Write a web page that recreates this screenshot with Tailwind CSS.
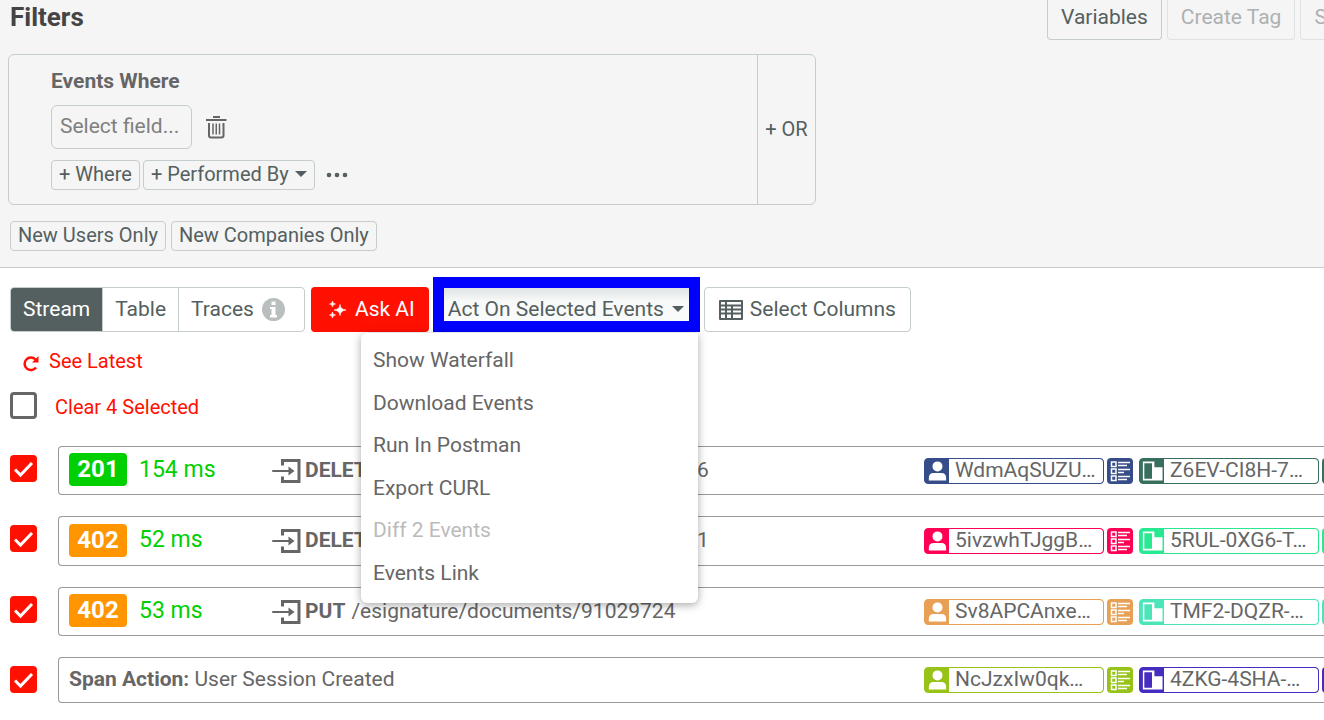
<!DOCTYPE html>
<html lang="en">
<head>
    <meta charset="utf-8">
    <meta name="viewport" content="width=device-width, initial-scale=1.0">
    <title>Events</title>
    <script src="https://cdn.jsdelivr.net/npm/@tailwindcss/browser@4"></script>
</head>
<body class="bg-white font-['Roboto',sans-serif] text-[21px] leading-6 text-[#666] overflow-x-hidden">

    <!-- shared icons -->
    <svg class="hidden">
        <symbol id="caret" viewBox="0 0 12 6"><path fill="currentColor" d="M0 0H12L6 6Z"/></symbol>
        <symbol id="check" viewBox="0 0 27 27"><path fill="none" stroke="#fff" stroke-width="3" d="M5 14.500L10.500 20L22 8"/></symbol>
        <symbol id="incoming" viewBox="0 0 29 24">
            <path fill="none" stroke="currentColor" stroke-width="3" d="M10.500 6.500V1.500H27V22.500H10.500V17.500"/>
            <path fill="none" stroke="currentColor" stroke-width="2" stroke-linecap="round" d="M1 12H18"/>
            <path fill="currentColor" d="M16.500 7.500L22.500 12L16.500 16.500Z"/>
        </symbol>
        <symbol id="user" viewBox="0 0 25 26"><path fill="#fff" d="M13 3A5.200 5.200 0 1 1 13 13.400A5.200 5.200 0 1 1 13 3ZM4 23V20Q4 15 9 15H17Q22 15 22 20V23Z"/></symbol>
        <symbol id="list" viewBox="0 0 26 26" fill="none" stroke="#fff">
            <path stroke-width="1.500" d="M4.500 4H9V8.500H4.500ZM4.500 11H9V15.500H4.500ZM4.500 18H9V22.500H4.500Z"/>
            <path stroke-width="1.500" d="M11 4.500H23M11 7.500H20M11 11.500H23M11 14.500H17M11 18.500H23M11 21.500H20"/>
        </symbol>
        <symbol id="company" viewBox="0 0 25 26"><path fill="#fff" fill-rule="evenodd" d="M3 3H15V9H23.500V23H3ZM4.500 5V21H12.500V5Z"/></symbol>
    </svg>

    <header class="bg-[#f5f5f5] border-b border-[#c5cdcd] pb-4">
        <div class="flex justify-between h-10 pl-2.5 overflow-hidden">
            <h1 class="text-[26px] leading-8 font-bold text-[#444] pt-px">Filters</h1>
            <div class="flex gap-[5px] w-[277px] whitespace-nowrap text-[#546060]">
                <button class="shrink-0 border border-t-0 border-[#c5cdcd] rounded-b px-[13px] pb-1.5">Variables</button>
                <button disabled class="shrink-0 border border-t-0 border-[#c5cdcd] rounded-b px-[13px] pb-1.5 opacity-45">Create Tag</button>
                <button disabled class="shrink-0 border border-t-0 border-[#c5cdcd] rounded-b px-[13px] pb-1.5 opacity-45">Save</button>
            </div>
        </div>

        <section class="flex mt-3.5 ml-2 max-w-[808px] border border-[#c5cdcd] rounded-md">
            <div class="grow pl-[42px] py-3.5">
                <h2 class="font-bold">Events Where</h2>
                <div class="flex items-center gap-3.5 mt-3">
                    <input type="text" aria-label="Field" placeholder="Select field..." class="w-[141px] h-11 pl-2 pb-0.5 border border-[#c5cdcd] rounded-md placeholder:text-[#808080]">
                    <button aria-label="Delete">
                        <svg class="w-[22px] h-6" viewBox="0 0 22 24" fill="none" stroke="#666" stroke-width="2"><path d="M0 5H20.500M7 2H14M3 8V20.500Q3 22.500 5 22.500H15.500Q17.500 22.500 17.500 20.500V8"/><path stroke-width="1.500" d="M7 8.500V19.500M10.250 8.500V19.500M13.500 8.500V19.500"/></svg>
                    </button>
                </div>
                <div class="flex items-center gap-[3px] mt-[11px] text-[20px] text-[#546060]">
                    <button class="h-[30px] px-[7px] pb-0.5 border border-[#c5cdcd] rounded">+ Where</button>
                    <button class="flex items-center gap-1.5 h-[30px] px-[7px] pb-0.5 border border-[#c5cdcd] rounded">+ Performed By
                        <svg class="w-3 h-1.5"><use href="#caret"/></svg>
                    </button>
                    <button aria-label="More" class="ml-2">
                        <svg class="w-[22px] h-1.5" viewBox="0 0 22 6" fill="#546060"><circle cx="3" cy="3" r="2.300"/><circle cx="11" cy="3" r="2.300"/><circle cx="19" cy="3" r="2.300"/></svg>
                    </button>
                </div>
            </div>
            <button class="w-[58px] pb-0.5 border-l border-[#c5cdcd] text-[20px] text-[#546060]">+ OR</button>
        </section>

        <div class="flex gap-[5px] mt-4 ml-2.5 text-[20px] text-[#546060]">
            <button class="h-[30px] px-[7px] pb-0.5 border border-[#c5cdcd] rounded">New Users Only</button>
            <button class="h-[30px] px-[7px] pb-0.5 border border-[#c5cdcd] rounded">New Companies Only</button>
        </div>
    </header>

    <main>
        <!-- toolbar -->
        <div class="relative flex items-end mt-[9px] ml-2.5 h-14 pb-px text-[#546060] whitespace-nowrap">
            <div class="flex h-[45px] border border-[#c5cdcd] rounded overflow-hidden">
                <button class="px-3 pb-0.5 bg-[#546060] text-white">Stream</button>
                <button class="px-3 pb-0.5 border-l border-[#c5cdcd]">Table</button>
                <button class="flex items-center gap-2 pl-3 pr-[19px] pb-0.5 border-l border-[#c5cdcd]">Traces
                    <svg class="w-[23px] h-[23px] mt-0.5" viewBox="0 0 23 23"><circle cx="11.500" cy="11.500" r="11.500" fill="#b9bfbf"/><path fill="#fff" d="M9.500 3.500H13.500V7H9.500ZM8 9H13.500V17H15V19.500H8V17H9.500V11H8Z"/></svg>
                </button>
            </div>
            <button class="flex items-center gap-2 h-[45px] ml-1.5 pl-[17px] pr-[14px] pb-0.5 rounded bg-[#ff1000] text-white">
                <svg class="w-[19px] h-[19px] mt-0.5" viewBox="0 0 19 19" fill="#fff"><path d="M12 4.500Q12.500 9.500 18 10Q12.500 10.500 12 15.500Q11.500 10.500 6 10Q11.500 9.500 12 4.500ZM4.500 1Q4.700 3.800 7.500 4Q4.700 4.200 4.500 7Q4.300 4.200 1.500 4Q4.300 3.800 4.500 1ZM4.500 12Q4.700 14.800 7.500 15Q4.700 15.200 4.500 18Q4.300 15.200 1.500 15Q4.300 14.800 4.500 12Z" stroke="#fff" stroke-width=".6"/></svg>
                Ask AI
            </button>
            <button class="flex items-center gap-2 h-[55px] ml-1 pl-1 pr-[5px] pt-2 border-[11px] border-[#0000ff] bg-linear-to-b from-[#dfe3e3] via-[#f8f9f9] via-40% to-[#f9fbfb]">Act On Selected Events
                <svg class="w-3 h-1.5"><use href="#caret"/></svg>
            </button>
            <button class="flex items-center gap-[7px] h-[45px] ml-1 px-[14px] pb-0.5 border border-[#c5cdcd] rounded">
                <svg class="w-6 h-[22px] mt-0.5" viewBox="0 0 24 22"><path fill="#546060" fill-rule="evenodd" d="M1 1H23Q24 1 24 2V20Q24 21 23 21H1Q0 21 0 20V2Q0 1 1 1ZM2 3V5.500H6V3ZM8 3V5.500H22V3ZM2 7.500V9.500H6V7.500ZM8 7.500V9.500H12V7.500ZM14 7.500V9.500H22V7.500ZM2 11.500V13.500H6V11.500ZM8 11.500V13.500H12V11.500ZM14 11.500V13.500H22V11.500ZM2 15.500V19H6V15.500ZM8 15.500V19H12V15.500ZM14 15.500V19H22V15.500Z"/></svg>
                Select Columns
            </button>

            <ul class="absolute z-10 left-[351px] top-14 w-[337px] pt-1.5 pb-[9px] bg-white rounded-md rounded-tr-none shadow-[0_2px_8px_rgba(0,0,0,0.35)] text-[#666]">
                <li><button class="w-full h-[42px] px-3 text-left">Show Waterfall</button></li>
                <li><button class="w-full h-[43px] px-3 text-left">Download Events</button></li>
                <li><button class="w-full h-[42px] px-3 text-left">Run In Postman</button></li>
                <li><button class="w-full h-[43px] px-3 text-left">Export CURL</button></li>
                <li><button disabled class="w-full h-[42px] px-3 text-left text-[#bbb]">Diff 2 Events</button></li>
                <li><button class="w-full h-[43px] px-3 text-left">Events Link</button></li>
            </ul>
        </div>

        <button class="flex items-center gap-2.5 mt-4 ml-[22px] text-[20px] text-[#ff1000]">
            <svg class="w-[17px] h-[17px] mt-1" viewBox="0 0 17 17"><path fill="none" stroke="#ff1000" stroke-width="2.500" d="M13.500 4.500A6.300 6.300 0 1 0 14 12.500"/><path fill="#ff1000" d="M16.500 1V7.500H10Z"/></svg>
            See Latest
        </button>

        <div class="flex items-center mt-[19px] ml-2.5 text-[20px]">
            <input type="checkbox" aria-label="Select all events" class="appearance-none w-[27px] h-[27px] border-3 border-[#666] rounded-sm">
            <button class="ml-[18px] pt-0.5 text-[#ff1000]">Clear 4 Selected</button>
        </div>

        <!-- event stream -->
        <ul class="flex flex-col gap-[21px] mt-[27px] ml-2.5 whitespace-nowrap">
            <li class="flex items-start">
                <label class="grid mt-[9px] mr-[21px]">
                    <input type="checkbox" checked aria-label="Select event" class="col-start-1 row-start-1 appearance-none w-[27px] h-[27px] rounded-sm bg-[#ff1000]">
                    <svg class="col-start-1 row-start-1 w-[27px] h-[27px] pointer-events-none"><use href="#check"/></svg>
                </label>
                <div class="grow min-w-0 overflow-hidden flex items-center h-[49px] pl-2.5 border border-r-0 border-[#999] rounded-l">
                    <span class="w-[58px] h-[33px] mb-0.5 rounded bg-[#00d000] text-white text-[24px] leading-8 font-bold text-center">201</span>
                    <span class="w-[145px] pl-3 pb-0.5 text-[23px] text-[#00d000]">154 ms</span>
                    <svg class="w-[29px] h-6 mr-1"><use href="#incoming"/></svg>
                    <p class="grow flex gap-1.5 pb-0.5"><b>DELETE</b> /esignature/documents/91029766</p>
                    <div class="shrink-0 flex w-[400px]">
                        <a href="#" class="shrink-0 flex items-center w-[180px] h-[26px] border border-[#364d8a] bg-[#364d8a] rounded overflow-hidden">
                            <svg class="w-6 h-[26px]"><use href="#user"/></svg>
                            <span class="grow h-6 pl-1.5 bg-white rounded-r-[3px] leading-[22px]">WdmAqSUZU…</span>
                        </a>
                        <button aria-label="User events" class="shrink-0 ml-[3px] mr-1.5 rounded bg-[#364d8a]"><svg class="w-[26px] h-[26px]"><use href="#list"/></svg></button>
                        <a href="#" class="shrink-0 flex items-center w-[180px] h-[26px] border border-[#386e5e] bg-[#386e5e] rounded overflow-hidden">
                            <svg class="w-6 h-[26px]"><use href="#company"/></svg>
                            <span class="grow h-6 pl-1.5 bg-white rounded-r-[3px] leading-[22px]">Z6EV-CI8H-7…</span>
                        </a>
                        <button aria-label="Company events" class="shrink-0 ml-[3px] rounded bg-[#386e5e]"><svg class="w-[26px] h-[26px]"><use href="#list"/></svg></button>
                    </div>
                </div>
            </li>
            <li class="flex items-start">
                <label class="grid mt-[9px] mr-[21px]">
                    <input type="checkbox" checked aria-label="Select event" class="col-start-1 row-start-1 appearance-none w-[27px] h-[27px] rounded-sm bg-[#ff1000]">
                    <svg class="col-start-1 row-start-1 w-[27px] h-[27px] pointer-events-none"><use href="#check"/></svg>
                </label>
                <div class="grow min-w-0 overflow-hidden flex items-center h-[50px] pl-2.5 border border-r-0 border-[#999] rounded-l">
                    <span class="w-[58px] h-[33px] mb-0.5 rounded bg-[#ff9500] text-white text-[24px] leading-8 font-bold text-center">402</span>
                    <span class="w-[145px] pl-3 pb-0.5 text-[23px] text-[#00d000]">52 ms</span>
                    <svg class="w-[29px] h-6 mr-1"><use href="#incoming"/></svg>
                    <p class="grow flex gap-1.5 pb-0.5"><b>DELETE</b> /esignature/documents/91029741</p>
                    <div class="shrink-0 flex w-[400px]">
                        <a href="#" class="shrink-0 flex items-center w-[180px] h-[26px] border border-[#ff0055] bg-[#ff0055] rounded overflow-hidden">
                            <svg class="w-6 h-[26px]"><use href="#user"/></svg>
                            <span class="grow h-6 pl-1.5 bg-white rounded-r-[3px] leading-[22px]">5ivzwhTJggB…</span>
                        </a>
                        <button aria-label="User events" class="shrink-0 ml-[3px] mr-1.5 rounded bg-[#ff0055]"><svg class="w-[26px] h-[26px]"><use href="#list"/></svg></button>
                        <a href="#" class="shrink-0 flex items-center w-[180px] h-[26px] border border-[#28e890] bg-[#28e890] rounded overflow-hidden">
                            <svg class="w-6 h-[26px]"><use href="#company"/></svg>
                            <span class="grow h-6 pl-1.5 bg-white rounded-r-[3px] leading-[22px]">5RUL-0XG6-T…</span>
                        </a>
                        <button aria-label="Company events" class="shrink-0 ml-[3px] rounded bg-[#28e890]"><svg class="w-[26px] h-[26px]"><use href="#list"/></svg></button>
                    </div>
                </div>
            </li>
            <li class="flex items-start">
                <label class="grid mt-[9px] mr-[21px]">
                    <input type="checkbox" checked aria-label="Select event" class="col-start-1 row-start-1 appearance-none w-[27px] h-[27px] rounded-sm bg-[#ff1000]">
                    <svg class="col-start-1 row-start-1 w-[27px] h-[27px] pointer-events-none"><use href="#check"/></svg>
                </label>
                <div class="grow min-w-0 overflow-hidden flex items-center h-[49px] pl-2.5 border border-r-0 border-[#999] rounded-l">
                    <span class="w-[58px] h-[33px] mb-0.5 rounded bg-[#ff9500] text-white text-[24px] leading-8 font-bold text-center">402</span>
                    <span class="w-[145px] pl-3 pb-0.5 text-[23px] text-[#00d000]">53 ms</span>
                    <svg class="w-[29px] h-6 mr-1"><use href="#incoming"/></svg>
                    <p class="grow flex gap-1.5 pb-0.5"><b>PUT</b> /esignature/documents/91029724</p>
                    <div class="shrink-0 flex w-[400px]">
                        <a href="#" class="shrink-0 flex items-center w-[180px] h-[26px] border border-[#e8a057] bg-[#e8a057] rounded overflow-hidden">
                            <svg class="w-6 h-[26px]"><use href="#user"/></svg>
                            <span class="grow h-6 pl-1.5 bg-white rounded-r-[3px] leading-[22px]">Sv8APCAnxe…</span>
                        </a>
                        <button aria-label="User events" class="shrink-0 ml-[3px] mr-1.5 rounded bg-[#e8a057]"><svg class="w-[26px] h-[26px]"><use href="#list"/></svg></button>
                        <a href="#" class="shrink-0 flex items-center w-[180px] h-[26px] border border-[#4be5b9] bg-[#4be5b9] rounded overflow-hidden">
                            <svg class="w-6 h-[26px]"><use href="#company"/></svg>
                            <span class="grow h-6 pl-1.5 bg-white rounded-r-[3px] leading-[22px]">TMF2-DQZR-…</span>
                        </a>
                        <button aria-label="Company events" class="shrink-0 ml-[3px] rounded bg-[#4be5b9]"><svg class="w-[26px] h-[26px]"><use href="#list"/></svg></button>
                    </div>
                </div>
            </li>
            <li class="flex items-start">
                <label class="grid mt-[9px] mr-[21px]">
                    <input type="checkbox" checked aria-label="Select event" class="col-start-1 row-start-1 appearance-none w-[27px] h-[27px] rounded-sm bg-[#ff1000]">
                    <svg class="col-start-1 row-start-1 w-[27px] h-[27px] pointer-events-none"><use href="#check"/></svg>
                </label>
                <div class="grow min-w-0 overflow-hidden flex items-center h-[46px] pl-2.5 border border-r-0 border-[#999] rounded-l">
                    <p class="grow pb-0.5"><b>Span Action:</b> User Session Created</p>
                    <div class="shrink-0 flex w-[400px]">
                        <a href="#" class="shrink-0 flex items-center w-[180px] h-[26px] border border-[#97c318] bg-[#97c318] rounded overflow-hidden">
                            <svg class="w-6 h-[26px]"><use href="#user"/></svg>
                            <span class="grow h-6 pl-1.5 bg-white rounded-r-[3px] leading-[22px]">NcJzxIw0qk…</span>
                        </a>
                        <button aria-label="User events" class="shrink-0 ml-[3px] mr-1.5 rounded bg-[#97c318]"><svg class="w-[26px] h-[26px]"><use href="#list"/></svg></button>
                        <a href="#" class="shrink-0 flex items-center w-[180px] h-[26px] border border-[#462dbf] bg-[#462dbf] rounded overflow-hidden">
                            <svg class="w-6 h-[26px]"><use href="#company"/></svg>
                            <span class="grow h-6 pl-1.5 bg-white rounded-r-[3px] leading-[22px]">4ZKG-4SHA-…</span>
                        </a>
                        <button aria-label="Company events" class="shrink-0 ml-[3px] rounded bg-[#462dbf]"><svg class="w-[26px] h-[26px]"><use href="#list"/></svg></button>
                    </div>
                </div>
            </li>
        </ul>
    </main>

</body>
</html>
